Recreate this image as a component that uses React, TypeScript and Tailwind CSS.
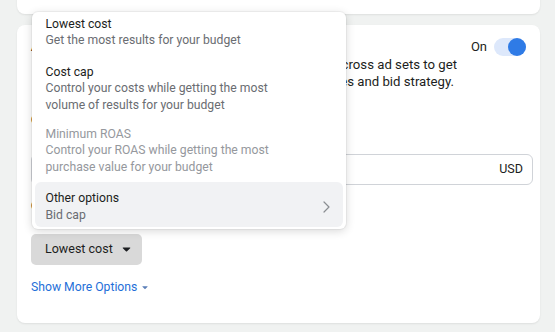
import React from 'react';

const MENU_ITEMS = [
  {
    title: 'Lowest cost',
    lines: ['Get the most results for your budget'],
    disabled: false,
    pad: 'pt-[3.5px] pb-[8px]',
  },
  {
    title: 'Cost cap',
    lines: ['Control your costs while getting the most', 'volume of results for your budget'],
    disabled: false,
    pad: 'pt-[7px] pb-[6px]',
  },
  {
    title: 'Minimum ROAS',
    lines: ['Control your ROAS while getting the most', 'purchase value for your budget'],
    disabled: true,
    pad: 'pt-[6.5px] pb-[7px]',
  },
];

const Caret = ({ className }: { className?: string }) => (
  <svg className={className} viewBox="0 0 10 6" fill="currentColor">
    <path d="M1 0.5h8c0.5 0 0.7 0.5 0.4 0.9L5.4 5.3c-0.2 0.2-0.6 0.2-0.8 0L0.6 1.4C0.3 1 0.5 0.5 1 0.5z" />
  </svg>
);

const BidStrategyMenu = () => (
  <div className="absolute left-[32px] top-[12px] w-[314px] rounded-[6px] bg-white px-[3px] pb-[2px] shadow-[0_2px_10px_rgba(0,0,0,0.16),0_0_0_1px_rgba(0,0,0,0.04)]">
    {MENU_ITEMS.map(item => (
      <div key={item.title} className={`px-[10.5px] ${item.pad}`}>
        <div className={item.disabled ? 'text-[#95989d]' : 'text-[#1c1e21]'}>{item.title}</div>
        {item.lines.map(line => (
          <div key={line} className={item.disabled ? 'text-[#95989d]' : 'text-[#6a6d72]'}>
            {line}
          </div>
        ))}
      </div>
    ))}
    <div className="flex items-center justify-between rounded-[6px] bg-[#f1f2f4] pl-[10.5px] pr-[13px] pt-[8px] pb-[4px]">
      <div>
        <div className="text-[#1c1e21]">Other options</div>
        <div className="text-[#6a6d72]">Bid cap</div>
      </div>
      <svg width="7" height="12" viewBox="0 0 7 12" fill="none">
        <path d="M1 1l5 5-5 5" stroke="#8a8d91" strokeWidth="1.2" strokeLinecap="round" strokeLinejoin="round" />
      </svg>
    </div>
  </div>
);

export default function App() {
  return (
    <div className="relative h-[332px] w-[555px] overflow-hidden bg-[#f0f2f1] font-['Roboto',sans-serif] text-[12.2px] leading-[16.5px] text-[#1c1e21]">
      <div className="pl-[17px] pr-[15px]">
        <div className="-mt-[20px] h-[34px] rounded-[8px] bg-white shadow-[0_1px_2px_rgba(0,0,0,0.08)]" />

        <div className="mt-[11px] h-[298px] rounded-[8px] bg-white pl-[14px] pr-[14px] pt-[13px] shadow-[0_1px_2px_rgba(0,0,0,0.08)]">
          <div className="flex h-[18px] items-center justify-between">
            <div className="text-[13px] font-bold">Advantage campaign budget</div>
            <div className="flex items-center gap-[7px]">
              <span className="text-[13px]">On</span>
              <div className="flex h-[18px] w-[32px] justify-end rounded-full bg-[#dde8fb]">
                <div className="h-[18px] w-[18px] rounded-full bg-[#2f7be6]" />
              </div>
            </div>
          </div>

          {/* lines end at fixed points, the start is under the open menu */}
          <div className="w-[426px] text-[13.2px] leading-[17px]">
            <div className="flex justify-end overflow-hidden whitespace-nowrap">
              budget will distribute your budget across ad sets to get
            </div>
            <div className="flex justify-end overflow-hidden whitespace-nowrap pr-[3px]">
              on your delivery optimisation choices and bid strategy.
            </div>
          </div>

          <div className="mt-[21px] text-[13px] leading-[17px] font-bold">Campaign budget</div>

          <div className="mt-[26px] flex h-[31px] w-[502px] items-center justify-between rounded-[6px] border border-[#d0d3d8] pl-[10px] pr-[9px] text-[12.5px]">
            <span>$20.00</span>
            <span>USD</span>
          </div>

          <div className="mt-[11.5px] text-[13px] leading-[17px] font-bold">Campaign bid strategy</div>

          <button className="mt-[20.5px] flex h-[30.5px] items-center gap-[9px] rounded-[5px] bg-[#d9d9d9] pl-[14px] pr-[11px] text-[12.5px] text-[#1c1e21]">
            Lowest cost
            <Caret className="h-[5px] w-[9px] text-[#1c1e21]" />
          </button>

          <div className="mt-[14px] flex items-center gap-[5px] leading-[17px] text-[#1f6fd8]">
            Show More Options
            <Caret className="mt-[2px] h-[3.5px] w-[6px] text-[#5b7fb8]" />
          </div>
        </div>
      </div>

      <BidStrategyMenu />
    </div>
  );
}
